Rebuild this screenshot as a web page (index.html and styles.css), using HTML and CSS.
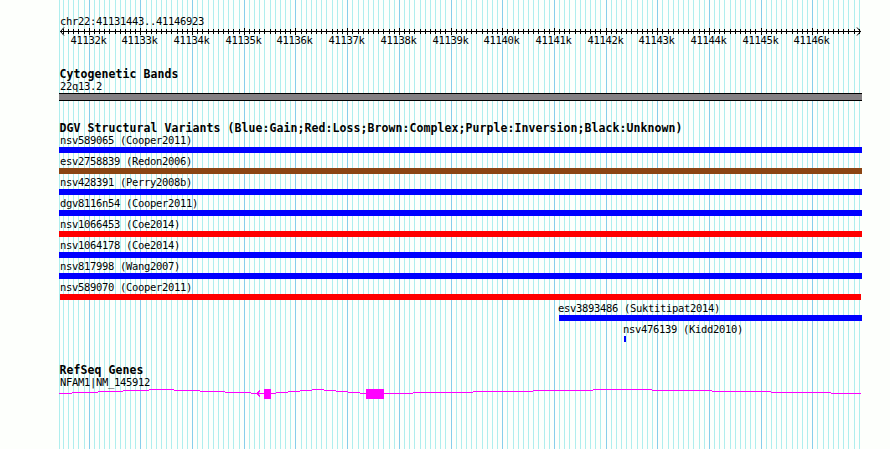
FILE: index.html
```
<!DOCTYPE html>
<html lang="en">
<head>
    <meta charset="UTF-8">
    <title>chr22:41131443..41146923</title>
    <link rel="stylesheet" href="styles.css">
</head>
<body>
    <main class="panel">
        <!-- Vertical grid, one line every 100 bp -->
        <svg class="grid" id="grid" width="803" height="449"></svg>

        <!-- Ruler -->
        <section class="ruler">
            <div class="label">chr22:41131443..41146923</div>
            <svg class="axis" id="axis" width="803" height="20">
                <path class="line" d="M1 4.5H802M5 .5L1.5 4.5L5 8.5M798 .5L801.5 4.5L798 8.5"/>
            </svg>
        </section>

        <section class="track cytobands">
            <h2>Cytogenetic Bands</h2>
            <div class="label">22q13.2</div>
            <div class="band"></div>
        </section>

        <section class="track variants">
            <h2>DGV Structural Variants (Blue:Gain;Red:Loss;Brown:Complex;Purple:Inversion;Black:Unknown)</h2>
            <div class="variant gain"><div class="label">nsv589065 (Cooper2011)</div></div>
            <div class="variant complex"><div class="label">esv2758839 (Redon2006)</div></div>
            <div class="variant gain"><div class="label">nsv428391 (Perry2008b)</div></div>
            <div class="variant gain"><div class="label">dgv8116n54 (Cooper2011)</div></div>
            <div class="variant loss"><div class="label">nsv1066453 (Coe2014)</div></div>
            <div class="variant gain"><div class="label">nsv1064178 (Coe2014)</div></div>
            <div class="variant gain"><div class="label">nsv817998 (Wang2007)</div></div>
            <div class="variant loss inset"><div class="label">nsv589070 (Cooper2011)</div></div>
            <div class="variant gain partial"><div class="label">esv3893486 (Suktitipat2014)</div></div>
            <div class="variant gain tiny"><div class="label">nsv476139 (Kidd2010)</div></div>
        </section>

        <section class="track genes">
            <h2>RefSeq Genes</h2>
            <div class="label">NFAM1|NM_145912</div>
            <svg class="gene" width="803" height="11" shape-rendering="crispEdges">
                <path class="intron" d="M0 4.5H13M13 3.5H39M39 2.5H64M64 1.5H90M90 .5H115M115 1.5H141M141 2.5H166M166 3.5H192M192 4.5H205"/>
                <path class="intron" d="M212 4.5H217M217 3.5H229M229 2.5H241M241 1.5H253M253 .5H265M265 1.5H277M277 2.5H289M289 3.5H301M301 4.5H307"/>
                <path class="intron" d="M325 4.5H354M354 3.5H414M414 2.5H474M474 1.5H534M534 .5H593M593 1.5H653M653 2.5H712M712 3.5H772M772 4.5H802"/>
                <path class="strand" d="M201 1.5L198 4.5L201 7.5"/>
                <rect class="exon" x="205" y="0" width="7" height="10"/>
                <rect class="exon" x="307" y="0" width="18" height="10"/>
            </svg>
        </section>
    </main>
    <script src="ruler.js"></script>
</body>
</html>
```

FILE: ruler.js
```
const START = 41131443;
const END = 41146923;
const SCALE = 800 / (END - START + 1);

const grid = document.getElementById('grid');
const axis = document.getElementById('axis');

function add(parent, name, attrs, text) {
    const el = document.createElementNS('http://www.w3.org/2000/svg', name);
    for (const key in attrs) el.setAttribute(key, attrs[key]);
    if (text) el.textContent = text;
    parent.appendChild(el);
}

add(grid, 'rect', { class: 'minor', x: 0, y: 0, width: 1, height: 449 });

for (let bp = Math.ceil(START / 100) * 100; bp <= END; bp += 100) {
    const x = Math.round(60 + (bp - START) * SCALE) - 59;
    const major = bp % 1000 === 0;
    add(grid, 'rect', { class: major ? 'major' : 'minor', x: x, y: 0, width: 1, height: 449 });
    add(axis, 'rect', { class: 'tick', x: x, y: major ? 1 : 2, width: 1, height: major ? 7 : 5 });
    if (major) {
        add(axis, 'text', { x: x - 18.5, y: 17 }, bp / 1000 + 'k');
    }
}
```

FILE: styles.css
```
* {
    margin: 0;
    padding: 0;
    box-sizing: border-box;
}

body {
    background: #fdfffc;
    color: #000;
    overflow: hidden;
}

.panel {
    position: relative;
    width: 803px;
    height: 449px;
    margin-left: 59px;
    padding-top: 15px;
}

svg {
    display: block;
}

/* Grid lies behind the tracks */
.grid {
    position: absolute;
    top: 0;
    left: 0;
    z-index: -1;
    shape-rendering: crispEdges;
}

.minor {
    fill: #afeeee;
}

.major {
    fill: #87ceeb;
}

.label,
.axis text {
    font-family: 'DejaVu Sans Mono', monospace;
    font-size: 10.5px;
    letter-spacing: -0.32px;
    white-space: pre;
}

.label {
    height: 12px;
    line-height: 12px;
    padding-left: 1px;
}

/* Ruler */
.line {
    fill: none;
    stroke: #000;
}

.tick {
    shape-rendering: crispEdges;
}

/* Tracks */
.track h2 {
    height: 12px;
    padding-left: 0.5px;
    font: bold 11.5px/13px 'DejaVu Sans Mono', monospace;
    letter-spacing: 0.077px;
    white-space: pre;
}

.cytobands {
    margin-top: 21px;
}

.band {
    height: 8px;
    margin-top: 1px;
    background: #848083;
    border: solid #000;
    border-width: 1px 0;
}

.variants {
    margin-top: 21px;
}

.variant {
    height: 21px;
}

.variant::after {
    content: '';
    display: block;
    height: 6px;
    margin-top: 1px;
    background: #00f;
}

.complex::after {
    background: #8b4513;
}

.loss::after {
    background: #f00;
}

.inset::after {
    margin-left: 1px;
    margin-right: 1px;
}

.partial {
    margin-left: 500px;
}

.partial .label,
.tiny .label {
    padding-left: 0;
    margin-left: -1px;
}

.tiny {
    margin-left: 565px;
}

.tiny::after {
    width: 2px;
}

/* Genes */
.genes {
    margin-top: 20px;
}

.gene {
    margin-top: 1px;
}

.intron,
.strand {
    fill: none;
    stroke: #f0f;
}

.exon {
    fill: #f0f;
}
```
